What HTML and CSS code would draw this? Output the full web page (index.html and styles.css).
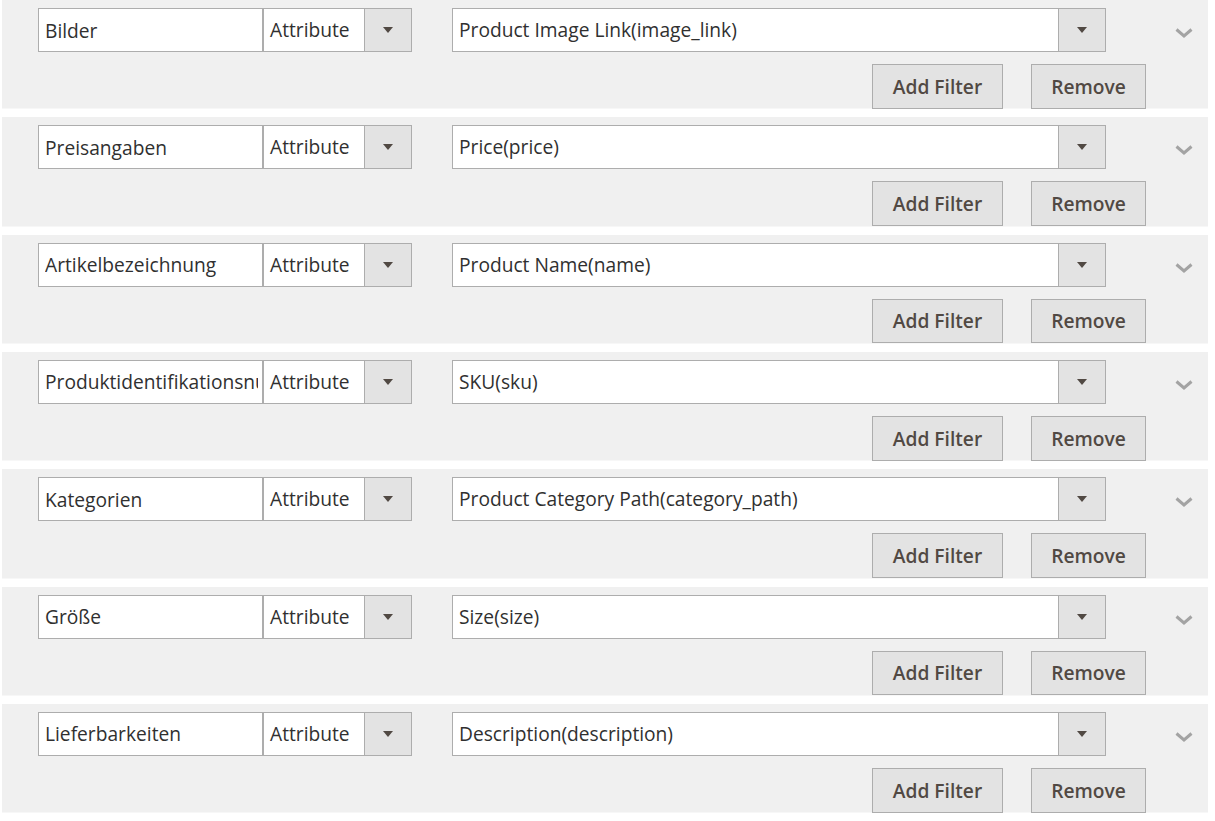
FILE: index.html
```html
<!DOCTYPE html>
<html lang="en">
  <head>
    <meta charset="UTF-8" />
    <meta name="viewport" content="width=device-width, initial-scale=1.0" />
    <title>Attribute Mapping</title>
    <link rel="stylesheet" href="styles.css">
  </head>
  <body>
    <div class="mapping">
      <div class="row">
        <div class="fields">
          <input class="name" type="text" value="Bilder" />
          <div class="select type"><span class="value">Attribute</span><span class="arrow"></span></div>
          <div class="select source"><span class="value">Product Image Link(image_link)</span><span class="arrow"></span></div>
          <div class="toggle">
            <svg width="18" height="10" viewBox="0 0 18 10"><polyline points="1.5,1.5 9,8 16.5,1.5" /></svg>
          </div>
        </div>
        <div class="actions">
          <button type="button">Add Filter</button>
          <button type="button" class="remove">Remove</button>
        </div>
      </div>

      <div class="row">
        <div class="fields">
          <input class="name" type="text" value="Preisangaben" />
          <div class="select type"><span class="value">Attribute</span><span class="arrow"></span></div>
          <div class="select source"><span class="value">Price(price)</span><span class="arrow"></span></div>
          <div class="toggle">
            <svg width="18" height="10" viewBox="0 0 18 10"><polyline points="1.5,1.5 9,8 16.5,1.5" /></svg>
          </div>
        </div>
        <div class="actions">
          <button type="button">Add Filter</button>
          <button type="button" class="remove">Remove</button>
        </div>
      </div>

      <div class="row">
        <div class="fields">
          <input class="name" type="text" value="Artikelbezeichnung" />
          <div class="select type"><span class="value">Attribute</span><span class="arrow"></span></div>
          <div class="select source"><span class="value">Product Name(name)</span><span class="arrow"></span></div>
          <div class="toggle">
            <svg width="18" height="10" viewBox="0 0 18 10"><polyline points="1.5,1.5 9,8 16.5,1.5" /></svg>
          </div>
        </div>
        <div class="actions">
          <button type="button">Add Filter</button>
          <button type="button" class="remove">Remove</button>
        </div>
      </div>

      <div class="row">
        <div class="fields">
          <input class="name" type="text" value="Produktidentifikationsnummer" />
          <div class="select type"><span class="value">Attribute</span><span class="arrow"></span></div>
          <div class="select source"><span class="value">SKU(sku)</span><span class="arrow"></span></div>
          <div class="toggle">
            <svg width="18" height="10" viewBox="0 0 18 10"><polyline points="1.5,1.5 9,8 16.5,1.5" /></svg>
          </div>
        </div>
        <div class="actions">
          <button type="button">Add Filter</button>
          <button type="button" class="remove">Remove</button>
        </div>
      </div>

      <div class="row">
        <div class="fields">
          <input class="name" type="text" value="Kategorien" />
          <div class="select type"><span class="value">Attribute</span><span class="arrow"></span></div>
          <div class="select source"><span class="value">Product Category Path(category_path)</span><span class="arrow"></span></div>
          <div class="toggle">
            <svg width="18" height="10" viewBox="0 0 18 10"><polyline points="1.5,1.5 9,8 16.5,1.5" /></svg>
          </div>
        </div>
        <div class="actions">
          <button type="button">Add Filter</button>
          <button type="button" class="remove">Remove</button>
        </div>
      </div>

      <div class="row">
        <div class="fields">
          <input class="name" type="text" value="Größe" />
          <div class="select type"><span class="value">Attribute</span><span class="arrow"></span></div>
          <div class="select source"><span class="value">Size(size)</span><span class="arrow"></span></div>
          <div class="toggle">
            <svg width="18" height="10" viewBox="0 0 18 10"><polyline points="1.5,1.5 9,8 16.5,1.5" /></svg>
          </div>
        </div>
        <div class="actions">
          <button type="button">Add Filter</button>
          <button type="button" class="remove">Remove</button>
        </div>
      </div>

      <div class="row">
        <div class="fields">
          <input class="name" type="text" value="Lieferbarkeiten" />
          <div class="select type"><span class="value">Attribute</span><span class="arrow"></span></div>
          <div class="select source"><span class="value">Description(description)</span><span class="arrow"></span></div>
          <div class="toggle">
            <svg width="18" height="10" viewBox="0 0 18 10"><polyline points="1.5,1.5 9,8 16.5,1.5" /></svg>
          </div>
        </div>
        <div class="actions">
          <button type="button">Add Filter</button>
          <button type="button" class="remove">Remove</button>
        </div>
      </div>
    </div>
  </body>
</html>
```

FILE: styles.css
```css
body {
  margin: 0;
  background: #fff;
  font-family: "Open Sans", "Liberation Sans", sans-serif;
  font-size: 19.2px;
  color: #303030;
}
.mapping {
  padding: 0 7px 0 2px;
}
.row {
  box-sizing: border-box;
  height: 109.33px;
  margin-bottom: 8px;
  padding: 8px 0 0 36px;
  background: #f0f0f0;
  border-bottom: 1px solid #f7f7f7;
}
.fields {
  display: flex;
  height: 44px;
}
.name {
  box-sizing: border-box;
  width: 225px;
  height: 44px;
  margin: 0;
  padding: 0 4px 0 6px;
  border: 1px solid #adadad;
  border-radius: 0;
  background: #fff;
  font: inherit;
  color: #303030;
  outline: none;
}
.select {
  box-sizing: border-box;
  display: flex;
  height: 44px;
  border: 1px solid #adadad;
  background: #fff;
}
.select .value {
  flex: 1;
  padding-left: 6px;
  line-height: 41px;
  white-space: nowrap;
  overflow: hidden;
}
.select .arrow {
  width: 46px;
  border-left: 1px solid #adadad;
  background: #e3e3e3;
  display: flex;
  align-items: center;
  justify-content: center;
}
.select .arrow::after {
  content: "";
  border-top: 6px solid #514943;
  border-left: 5px solid transparent;
  border-right: 5px solid transparent;
}
.type {
  width: 149px;
}
.source {
  width: 654px;
  margin-left: 40px;
}
.toggle {
  flex: 1;
  display: flex;
  align-items: center;
  justify-content: center;
  padding-left: 53px;
  padding-top: 6px;
}
.toggle polyline {
  fill: none;
  stroke: #a3a3a3;
  stroke-width: 3;
}
.actions {
  display: flex;
  justify-content: flex-end;
  gap: 28px;
  margin-top: 12px;
  padding-right: 62px;
}
.actions button {
  box-sizing: border-box;
  height: 44.67px;
  width: 131px;
  padding: 0;
  border: 1px solid #adadad;
  border-radius: 0;
  background: #e3e3e3;
  font: inherit;
  font-size: 19.2px;
  font-weight: 600;
  color: #514943;
  cursor: pointer;
}
.actions .remove {
  width: 115px;
}
```
